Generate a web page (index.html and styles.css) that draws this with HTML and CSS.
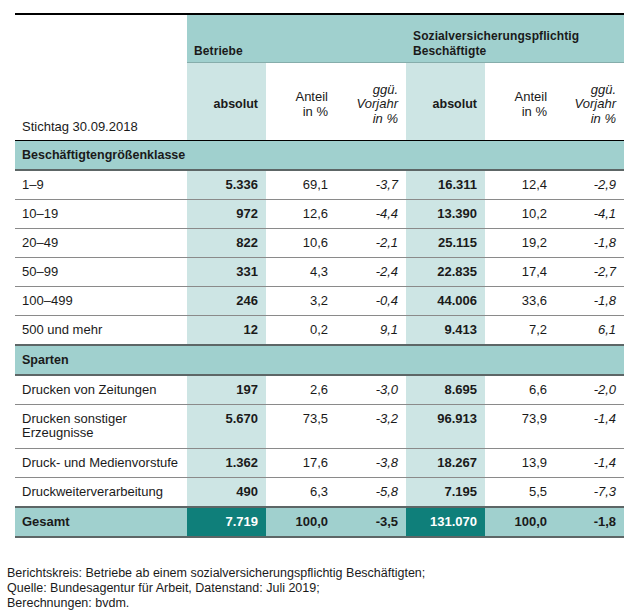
FILE: index.html
```html
<!DOCTYPE html>
<html lang="de">
<head>
<meta charset="utf-8">
<link rel="stylesheet" href="styles.css">
</head>
<body>
<div class="page">
<table class="tbl">
  <colgroup>
    <col class="c-label"><col class="c-abs"><col class="c-num"><col class="c-num">
    <col class="c-abs"><col class="c-num"><col class="c-last">
  </colgroup>
  <thead>
    <tr class="h1">
      <th class="stichtag" rowspan="2">Stichtag 30.09.2018</th>
      <th class="grp" colspan="3">Betriebe</th>
      <th class="grp" colspan="3">Sozialversicherungspflichtig<br>Beschäftigte</th>
    </tr>
    <tr class="h2">
      <th class="abs">absolut</th>
      <th class="num">Anteil<br>in %</th>
      <th class="num it">ggü.<br>Vorjahr<br>in %</th>
      <th class="abs">absolut</th>
      <th class="num">Anteil<br>in %</th>
      <th class="num it">ggü.<br>Vorjahr<br>in %</th>
    </tr>
  </thead>
  <tbody>
    <tr class="section"><td colspan="7">Beschäftigtengrößenklasse</td></tr>
    <tr><td>1–9</td><td class="abs">5.336</td><td class="num">69,1</td><td class="num it">-3,7</td><td class="abs">16.311</td><td class="num">12,4</td><td class="num it">-2,9</td></tr>
    <tr><td>10–19</td><td class="abs">972</td><td class="num">12,6</td><td class="num it">-4,4</td><td class="abs">13.390</td><td class="num">10,2</td><td class="num it">-4,1</td></tr>
    <tr><td>20–49</td><td class="abs">822</td><td class="num">10,6</td><td class="num it">-2,1</td><td class="abs">25.115</td><td class="num">19,2</td><td class="num it">-1,8</td></tr>
    <tr><td>50–99</td><td class="abs">331</td><td class="num">4,3</td><td class="num it">-2,4</td><td class="abs">22.835</td><td class="num">17,4</td><td class="num it">-2,7</td></tr>
    <tr><td>100–499</td><td class="abs">246</td><td class="num">3,2</td><td class="num it">-0,4</td><td class="abs">44.006</td><td class="num">33,6</td><td class="num it">-1,8</td></tr>
    <tr class="last"><td>500 und mehr</td><td class="abs">12</td><td class="num">0,2</td><td class="num it">9,1</td><td class="abs">9.413</td><td class="num">7,2</td><td class="num it">6,1</td></tr>
    <tr class="section"><td colspan="7">Sparten</td></tr>
    <tr><td>Drucken von Zeitungen</td><td class="abs">197</td><td class="num">2,6</td><td class="num it">-3,0</td><td class="abs">8.695</td><td class="num">6,6</td><td class="num it">-2,0</td></tr>
    <tr class="two"><td>Drucken sonstiger<br>Erzeugnisse</td><td class="abs">5.670</td><td class="num">73,5</td><td class="num it">-3,2</td><td class="abs">96.913</td><td class="num">73,9</td><td class="num it">-1,4</td></tr>
    <tr><td>Druck- und Medienvorstufe</td><td class="abs">1.362</td><td class="num">17,6</td><td class="num it">-3,8</td><td class="abs">18.267</td><td class="num">13,9</td><td class="num it">-1,4</td></tr>
    <tr class="last"><td>Druckweiterverarbeitung</td><td class="abs">490</td><td class="num">6,3</td><td class="num it">-5,8</td><td class="abs">7.195</td><td class="num">5,5</td><td class="num it">-7,3</td></tr>
    <tr class="total"><td>Gesamt</td><td class="abs">7.719</td><td class="num">100,0</td><td class="num">-3,5</td><td class="abs">131.070</td><td class="num">100,0</td><td class="num">-1,8</td></tr>
  </tbody>
</table>
<p class="note">Berichtskreis: Betriebe ab einem sozialversicherungspflichtig Beschäftigten;<br>Quelle: Bundesagentur für Arbeit, Datenstand: Juli 2019;<br>Berechnungen: bvdm.</p>
</div>
</body>
</html>
```
FILE: styles.css
```css
html, body {
  margin: 0;
  padding: 0;
  background: #fff;
}
.page {
  padding: 13px 17px 0 15px;
  font-family: "Liberation Sans", Arial, sans-serif;
  color: #1a1a1a;
}
.tbl {
  border-collapse: collapse;
  width: 609px;
  table-layout: fixed;
  font-size: 13px;
  border-top: 2px solid #000;
}
.c-label { width: 172px; }
.c-abs { width: 79px; }
.c-num { width: 70px; }
.c-last { width: 69px; }

.tbl th, .tbl td {
  padding: 7px 8px 7px 7px;
  line-height: 14px;
  vertical-align: top;
  text-align: left;
}
.tbl th { font-weight: normal; }

.h1 th { height: 37px; }
.h1 .grp {
  background: #a0d0ce;
  font-weight: bold;
  font-size: 12px;
  line-height: 15px;
  vertical-align: bottom;
  padding-bottom: 3px;
  letter-spacing: 0.1px;
  border-bottom: 1px solid #86adab;
}
.stichtag {
  vertical-align: bottom !important;
  padding-bottom: 6px !important;
  border-bottom: 1px solid #000;
}
.h2 th {
  vertical-align: middle;
  border-bottom: 1px solid #000;
  line-height: 14.5px;
  height: 63px;
  padding-top: 10px;
  padding-bottom: 4px;
}
.h2 th.abs {
  font-weight: bold;
  font-size: 12.5px;
}
.num, .abs { text-align: right !important; }
.abs { background: #cde5e4; }
td.abs { font-weight: bold; }
.it { font-style: italic; }

tbody tr { border-bottom: 1px solid #8a8a8a; }
tbody tr.last { border-bottom: 2px solid #5d6666; }
tr.two td { padding-bottom: 8px; }

tr.section td {
  background: #a0d0ce;
  font-weight: bold;
  font-size: 12.5px;
  padding-top: 7px;
  padding-bottom: 7px;
}
tr.section { border-bottom: 2px solid #5d6666; }

tr.total td {
  background: #a0d0ce;
  font-weight: bold;
  padding-top: 7px;
  padding-bottom: 7px;
}
tr.total td.abs {
  background: #0f7f7a;
  color: #fff;
}
tr.total { border-bottom: 2px solid #5d6666; }

.note {
  margin: 28px 0 0 -8px;
  font-size: 12.5px;
  line-height: 15px;
  color: #1a1a1a;
}
```
